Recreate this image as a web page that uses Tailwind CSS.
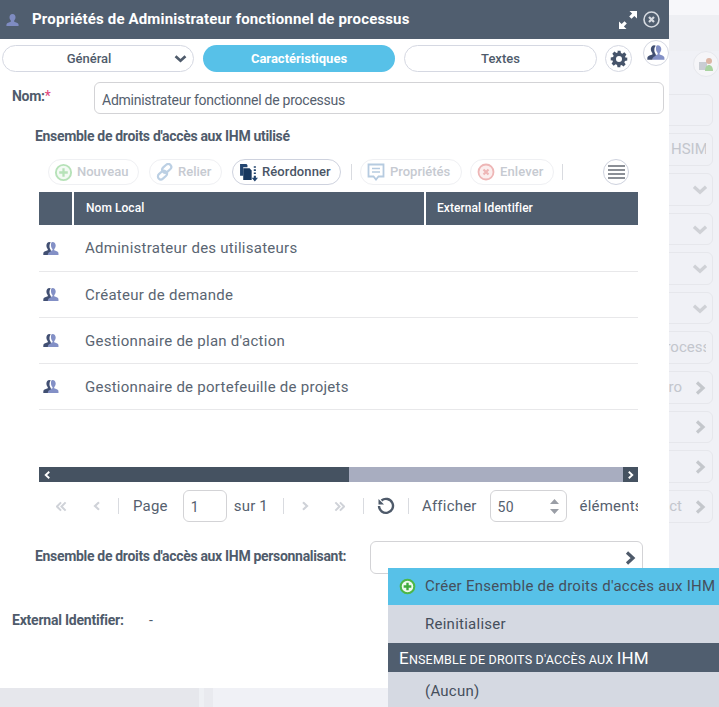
<!DOCTYPE html>
<html lang="fr"><head><meta charset="utf-8"><script src="https://cdn.jsdelivr.net/npm/@tailwindcss/browser@4"></script></head>
<body class="font-['Roboto',sans-serif] bg-[#f0f1f6] overflow-hidden">
<svg class="hidden"><defs>
<symbol id="duo" viewBox="0 0 16 16"><path fill="#8390c6" d="M9.500 1c2 0 3.200 1.600 3.200 3.500 0 1.500-.7 2.900-1.500 3.600v1.200c1.800.6 3.600 1.300 4.100 2.300.2.500.2 1.700.2 2.400H5c0-.7 0-1.900.3-2.400.5-1 2.400-1.700 4.200-2.300V8.100c-.8-.7-1.500-2.100-1.500-3.600 0-1.900 0-3.500 1.500-3.500z"/><path fill="#414f72" d="M6.500 1C4.600 1 3.400 2.600 3.400 4.500c0 1.500.6 2.900 1.400 3.600v1.200c-1.800.6-3.800 1.300-4.300 2.300-.2.500-.2 1.700-.2 2.400h4.600c0-1.200.6-2.400 1.700-2.900l1.200-.6V9c-.8-1-1.300-2.300-1.300-3.500 0-1.600.3-2.900 1.300-3.900C7.300 1.200 6.900 1 6.500 1z"/></symbol>
<symbol id="plus" viewBox="0 0 20 20"><circle cx="10" cy="10" r="8" fill="#e9f7ea" stroke="#6fc773" stroke-width="2"/><path d="M10 5.500v9M5.500 10h9" stroke="#6fc773" stroke-width="2.400"/></symbol>
<symbol id="gt" viewBox="0 0 12 14"><path d="M3 1.500 9 7l-6 5.500" fill="none" stroke="currentColor" stroke-width="3.200"/></symbol>
<symbol id="dn" viewBox="0 0 14 10"><path d="M1.500 2.500 7 7.500l5.500-5" fill="none" stroke="currentColor" stroke-width="3"/></symbol>
<symbol id="gg" viewBox="0 0 12 12"><path d="M1.500 1.500 6 6l-4.500 4.500M6.500 1.500 11 6l-4.500 4.500" fill="none" stroke="currentColor" stroke-width="2.200"/></symbol>
</defs></svg>

<div class="relative w-[719px] h-[707px] overflow-hidden">

<!-- page behind the window -->
<div class="absolute inset-0 bg-[#f0f1f6]">
  <div class="h-[15px] bg-[#f7f7fa]"></div>
  <div class="h-[36px] bg-[#eeeff3]"></div>
  <div class="h-[43px] pl-[693px]">
    <div class="w-[26px] h-[26px] rounded-full border border-[#e6e7ec] bg-[#f5f5f8] flex items-center justify-center">
      <svg width="16" height="16" viewBox="0 0 16 16"><rect x="1" y="6" width="8" height="8" fill="#c9cdd3"/><circle cx="11" cy="5" r="3" fill="#dcb6a4"/><path d="M7 15c0-4 2-6 4-6s4 2 4 6z" fill="#a9d3a0"/></svg>
    </div>
  </div>
  <div class="ml-[640px] w-[73px] flex flex-col gap-[7px] text-[#c3c6cd] text-[15px]">
    <div class="h-[32px] rounded-md border border-[#e6e7ec]"></div>
    <div class="h-[33px] rounded-md border border-[#e6e7ec] flex items-center pl-[30px] pr-[6px]"><span class="block overflow-hidden whitespace-nowrap">HSIM,I</span></div>
    <div class="h-[33px] rounded-md border border-[#e6e7ec] flex items-center justify-end pr-[4px] text-[#cfd1d6]"><svg width="16" height="11"><use href="#dn"/></svg></div>
    <div class="h-[32px] rounded-md border border-[#e6e7ec] flex items-center justify-end pr-[4px] text-[#cfd1d6]"><svg width="16" height="11"><use href="#dn"/></svg></div>
    <div class="h-[33px] rounded-md border border-[#e6e7ec] flex items-center justify-end pr-[4px] text-[#cfd1d6]"><svg width="16" height="11"><use href="#dn"/></svg></div>
    <div class="h-[32px] rounded-md border border-[#e6e7ec] flex items-center justify-end pr-[4px] text-[#cfd1d6]"><svg width="16" height="11"><use href="#dn"/></svg></div>
    <div class="h-[33px] rounded-md border border-[#e6e7ec] flex items-center pl-[16px] pr-[6px]"><span class="block overflow-hidden whitespace-nowrap">process</span></div>
    <div class="h-[33px] rounded-md border border-[#e6e7ec] flex items-center justify-end gap-[12px] pr-[6px] overflow-hidden">pro<svg class="text-[#c4c7cc]" width="12" height="16"><use href="#gt"/></svg></div>
    <div class="h-[32px] rounded-md border border-[#e6e7ec] flex items-center justify-end pr-[6px] text-[#c4c7cc]"><svg width="12" height="16"><use href="#gt"/></svg></div>
    <div class="h-[33px] rounded-md border border-[#e6e7ec] flex items-center justify-end pr-[6px] text-[#c4c7cc]"><svg width="12" height="16"><use href="#gt"/></svg></div>
    <div class="h-[33px] rounded-md border border-[#e6e7ec] flex items-center justify-end gap-[12px] pr-[6px] overflow-hidden">act<svg class="text-[#c4c7cc]" width="12" height="16"><use href="#gt"/></svg></div>
  </div>
  <div class="absolute left-0 bottom-0 h-[19px] flex">
    <div class="w-[199px] bg-[#e6e7ec]"></div>
    <div class="w-[5px] bg-[#eef0f4]"></div>
    <div class="w-[9px] bg-[#e9eaef]"></div>
  </div>
</div>

<!-- properties window -->
<div class="absolute left-0 top-0 w-[669px] h-[688px] bg-white">
  <header class="h-[39px] bg-[#505e6f] flex items-center pl-[6px] pr-[9px]">
    <svg width="13" height="14" viewBox="0 0 13 14"><path fill="#7f8cc2" d="M6.500 1C8.500 1 9.500 2.500 9.500 4.300c0 1.300-.5 2.500-1.300 3.200v1.300c1.700.5 3.800 1.200 4.200 2.100.2.500.2 1.600.2 2.100H.4c0-.6 0-1.600.2-2.100.4-.9 2.500-1.600 4.200-2.100V7.500C4 6.800 3.500 5.600 3.500 4.300 3.500 2.500 4.500 1 6.500 1z"/></svg>
    <h1 class="ml-[13px] text-white text-[15px] font-bold tracking-[0.16px] whitespace-nowrap">Propriétés de Administrateur fonctionnel de processus</h1>
    <div class="ml-auto flex items-center gap-[6px]">
      <svg width="18" height="18" viewBox="0 0 18 18" fill="#fff"><path d="M10.500 0H18v7.500l-2.600-2.600-2.900 2.900-2.300-2.300 2.900-2.900z"/><path d="M7.500 18H0v-7.500l2.600 2.600 2.900-2.900 2.300 2.300-2.900 2.900z"/></svg>
      <svg width="17" height="17" viewBox="0 0 17 17"><circle cx="8.500" cy="8.500" r="7.500" fill="none" stroke="#d6dae0" stroke-width="1.600"/><path d="m6 6 5 5m0-5-5 5" stroke="#d6dae0" stroke-width="2.200"/></svg>
    </div>
  </header>

  <nav class="flex items-center gap-[9px] pl-[2px] mt-[6px] text-[13px]">
    <div class="relative w-[192px] h-[27px] rounded-full border border-[#d5d8e2] flex items-center justify-center pr-[18px] text-[#4f5b6b] font-medium">Général
      <svg class="absolute right-[6px] top-[8px] text-[#4f5b6b]" width="13" height="9"><use href="#dn"/></svg></div>
    <div class="w-[192px] h-[27px] rounded-full bg-[#57c1e8] text-white font-bold flex items-center justify-center">Caractéristiques</div>
    <div class="w-[193px] h-[27px] rounded-full border border-[#d5d8e2] flex items-center justify-center text-[#4f5b6b] font-medium">Textes</div>
    <div class="ml-[-1px] w-[27px] h-[27px] rounded-full border border-[#d5d8e2] flex items-center justify-center">
      <svg width="18" height="18" viewBox="0 0 24 24" fill="#46546a"><path fill-rule="evenodd" d="M10 1h4l.6 3.100 1.900.8 2.600-1.800 2.800 2.800-1.800 2.600.8 1.900L23 10v4l-3.100.6-.8 1.900 1.800 2.600-2.800 2.800-2.600-1.800-1.900.8L14 23h-4l-.6-3.100-1.900-.8-2.600 1.800-2.800-2.800 1.800-2.600-.8-1.900L1 14v-4l3.100-.6.8-1.900-1.800-2.600 2.800-2.800 2.600 1.800 1.900-.8zm2 7a4 4 0 1 0 0 8 4 4 0 0 0 0-8z"/></svg>
    </div>
  </nav>

  <div class="flex mt-[10px] pl-[12px] pr-[5px]">
    <label class="w-[82px] pt-[4px] text-[14px] font-bold text-[#4f5b6b] tracking-[-0.3px]">Nom:<span class="text-[#e0457b] font-normal">*</span></label>
    <div class="flex-1 h-[32px] rounded-md border border-[#d3d3d6] flex items-center pl-[7px] pt-[4px] text-[14px] text-[#55606e] tracking-[-0.25px]">Administrateur fonctionnel de processus</div>
  </div>

  <h2 class="ml-[35px] mt-[13px] text-[14px] leading-[18px] font-bold text-[#4f5b6b] tracking-[-0.32px]">Ensemble de droits d'accès aux IHM utilisé</h2>

  <div class="flex items-center mt-[14px] ml-[48px] w-[581px] h-[26px] text-[13px] font-medium text-[#c6cad1]">
    <div class="w-[91px] h-[26px] rounded-full border border-[#eff0f3] flex items-center pl-[5px] gap-[4px]"><svg width="19" height="19" class="opacity-50"><use href="#plus"/></svg>Nouveau</div>
    <div class="ml-[10px] w-[73px] h-[26px] rounded-full border border-[#eff0f3] flex items-center pl-[4px] gap-[4px]">
      <svg width="20" height="18" viewBox="0 0 20 18" fill="none" stroke="#bcd0e4" stroke-width="2.200"><rect x="-4" y="-2" width="10" height="6" rx="3" transform="translate(7 12) rotate(-42)"/><rect x="-4" y="-3" width="10" height="6" rx="3" transform="translate(12 6) rotate(-42)"/></svg>Relier</div>
    <div class="ml-[10px] w-[109px] h-[26px] rounded-full border border-[#ced2de] flex items-center pl-[6px] gap-[4px] text-[#4a5566] tracking-[0.1px]">
      <svg width="19" height="19" viewBox="0 0 18 18"><path fill="#23456f" d="M1 1h6l1 1v2H4v8H1z"/><path fill="#17375e" d="M4 5h6l2 2v9H4z"/><path fill="#23456f" d="M14 3h2v1.500h-2zM14 6h2v1.500h-2zM14 9h2v1.500h-2zM14 12h2v2h2l-3 3.500-3-3.500h2z"/></svg>Réordonner</div>
    <div class="ml-[10px] w-[1px] h-[16px] bg-[#d9dbe0]"></div>
    <div class="ml-[8px] w-[102px] h-[26px] rounded-full border border-[#eff0f3] flex items-center pl-[6px] gap-[5px]">
      <svg width="18" height="19" viewBox="0 0 18 19" fill="none"><path d="M1.500 1.500h15v12h-5L9 16.500l-2.500-3h-5z" stroke="#b6cbe0" stroke-width="1.800"/><path d="M5 5.500h8M5 9h8" stroke="#b6cbe0" stroke-width="1.500"/></svg>Propriétés</div>
    <div class="ml-[8px] w-[84px] h-[26px] rounded-full border border-[#eff0f3] flex items-center pl-[6px] gap-[5px] tracking-[0.1px]">
      <svg width="18" height="18" viewBox="0 0 18 18"><circle cx="9" cy="9" r="7.500" fill="#fbeeee" stroke="#eeb6b6" stroke-width="1.800"/><path d="m6.500 6.500 5 5m0-5-5 5" stroke="#eeb6b6" stroke-width="2.200"/></svg>Enlever</div>
    <div class="ml-[8px] w-[1px] h-[16px] bg-[#d9dbe0]"></div>
    <div class="ml-auto w-[26px] h-[26px] rounded-full border border-[#ced2de] flex flex-col items-center justify-center gap-[2px]">
      <span class="w-[17px] h-[2px] bg-[#8b8f96]"></span><span class="w-[17px] h-[2px] bg-[#8b8f96]"></span><span class="w-[17px] h-[2px] bg-[#8b8f96]"></span><span class="w-[17px] h-[2px] bg-[#8b8f96]"></span>
    </div>
  </div>

  <div class="ml-[39px] w-[599px] mt-[7px]">
    <div class="flex h-[33px] bg-[#505e6f] text-white text-[12px] font-medium items-center tracking-[0.05px]">
      <div class="w-[35px] h-full border-r-[2px] border-white"></div>
      <div class="w-[352px] pl-[12px] pb-[1px] h-full flex items-center border-r-[2px] border-white">Nom Local</div>
      <div class="pl-[11px] pb-[1px]">External Identifier</div>
    </div>
    <div class="h-[242px] text-[15px] text-[#5a6572] tracking-[0.26px]">
      <div class="h-[47px] border-b-[1px] border-[#e8e8ea] flex items-center pt-[1px]"><svg class="ml-[4px]" width="16" height="16"><use href="#duo"/></svg><span class="ml-[26px]">Administrateur des utilisateurs</span></div>
      <div class="h-[46px] border-b-[1px] border-[#e8e8ea] flex items-center pt-[1px]"><svg class="ml-[4px]" width="16" height="16"><use href="#duo"/></svg><span class="ml-[26px]">Créateur de demande</span></div>
      <div class="h-[46px] border-b-[1px] border-[#e8e8ea] flex items-center pt-[1px]"><svg class="ml-[4px]" width="16" height="16"><use href="#duo"/></svg><span class="ml-[26px]">Gestionnaire de plan d'action</span></div>
      <div class="h-[46px] border-b-[1px] border-[#e8e8ea] flex items-center pt-[1px]"><svg class="ml-[4px]" width="16" height="16"><use href="#duo"/></svg><span class="ml-[26px]">Gestionnaire de portefeuille de projets</span></div>
    </div>
    <div class="flex h-[15px] bg-[#a8adc0] text-white">
      <div class="w-[310px] bg-[#455261] pl-[5px] flex items-center"><svg class="rotate-180" width="7" height="10" viewBox="0 0 12 14"><use href="#gt"/></svg></div>
      <div class="ml-auto w-[15px] bg-[#455261] flex items-center justify-center"><svg width="7" height="10" viewBox="0 0 12 14"><use href="#gt"/></svg></div>
    </div>
    <div class="flex items-center h-[32px] mt-[8px] text-[15px] text-[#55606e] tracking-[0.2px] overflow-hidden whitespace-nowrap">
      <svg class="ml-[17px] rotate-180 text-[#cfd2d8] shrink-0" width="11" height="11"><use href="#gg"/></svg>
      <svg class="ml-[26px] rotate-180 text-[#cfd2d8] shrink-0" width="8" height="12" viewBox="0 0 12 14"><use href="#gt"/></svg>
      <span class="ml-[17px] w-[1px] h-[16px] bg-[#d9dbe0] shrink-0"></span>
      <span class="ml-[14px]">Page</span>
      <span class="ml-[15px] w-[44px] h-[32px] rounded-md border border-[#d3d3d6] flex items-center pl-[7px] pt-[3px] text-[14px] shrink-0">1</span>
      <span class="ml-[7px]">sur 1</span>
      <span class="ml-[15px] w-[1px] h-[16px] bg-[#d9dbe0] shrink-0"></span>
      <svg class="ml-[17px] text-[#cfd2d8] shrink-0" width="8" height="12" viewBox="0 0 12 14"><use href="#gt"/></svg>
      <svg class="ml-[25px] text-[#cfd2d8] shrink-0" width="11" height="11"><use href="#gg"/></svg>
      <span class="ml-[18px] w-[1px] h-[16px] bg-[#d9dbe0] shrink-0"></span>
      <svg class="ml-[13px] shrink-0" width="18" height="18" viewBox="0 0 18 18" fill="none"><path d="M4.500 3.500A7 7 0 1 1 2 9" stroke="#4e5a6a" stroke-width="2.400"/><path d="M1.500 2v5.500H7z" fill="#4e5a6a"/></svg>
      <span class="ml-[13px] w-[1px] h-[16px] bg-[#d9dbe0] shrink-0"></span>
      <span class="ml-[13px]">Afficher</span>
      <span class="ml-[13px] relative w-[77px] h-[32px] rounded-md border border-[#d3d3d6] flex items-center pl-[7px] pt-[3px] text-[14px] shrink-0">50
        <svg class="absolute right-[6px] top-[8px]" width="11" height="15" viewBox="0 0 11 15" fill="#9a9ea6"><path d="M5.500 0 10 5H1zM5.500 15 1 10h9z"/></svg></span>
      <span class="ml-[13px]">éléments</span>
    </div>
  </div>

  <div class="flex items-start mt-[19px] ml-[35px]">
    <span class="w-[335px] pt-[6px] text-[14px] leading-[18px] font-bold text-[#4f5b6b] tracking-[-0.32px]">Ensemble de droits d'accès aux IHM personnalisant:</span>
    <div class="w-[273px] h-[33px] rounded-md border border-[#d3d3d6] flex items-center justify-end pr-[6px] text-[#4e5a6a]"><svg width="12" height="16"><use href="#gt"/></svg></div>
  </div>

  <div class="flex mt-[37px] ml-[12px] text-[#4f5b6b] text-[14px] leading-[18px]">
    <span class="w-[137px] font-bold tracking-[-0.22px]">External Identifier:</span><span>-</span>
  </div>
</div>

<!-- floating profile button -->
<div class="absolute left-[643px] top-[40px] w-[26px] h-[26px] rounded-full bg-white border border-[#d5d8e2] flex items-center justify-center">
  <svg width="18" height="18"><use href="#duo"/></svg>
</div>

<!-- dropdown menu -->
<div class="absolute left-[388px] top-[568px] w-[331px] h-[139px] bg-[#d5d9e2] text-[15px] text-[#454f5c] tracking-[0.25px] whitespace-nowrap">
  <div class="h-[37px] bg-[#57c1e8] flex items-center pl-[11px] gap-[9px]"><svg width="17" height="17" viewBox="0 0 20 20"><circle cx="10" cy="10" r="8" fill="#eefaee" stroke="#4cb748" stroke-width="2.400"/><path d="M10 5.500v9M5.500 10h9" stroke="#3faa3c" stroke-width="2.800"/></svg><span>Créer Ensemble de droits d'accès aux IHM</span></div>
  <div class="h-[38px] flex items-center pl-[37px] pt-[1px]">Reinitialiser</div>
  <div class="h-[29px] bg-[#505e6f] flex items-baseline pt-[3px] pl-[11px] text-white text-[12.5px] uppercase tracking-[0.2px]"><span class="text-[17px]">E</span><span class="whitespace-pre">nsemble de droits d'accès aux </span><span class="text-[17px]">IHM</span></div>
  <div class="h-[35px] flex items-center pl-[37px] pt-[3px]">(Aucun)</div>
</div>

</div>
</body></html>
